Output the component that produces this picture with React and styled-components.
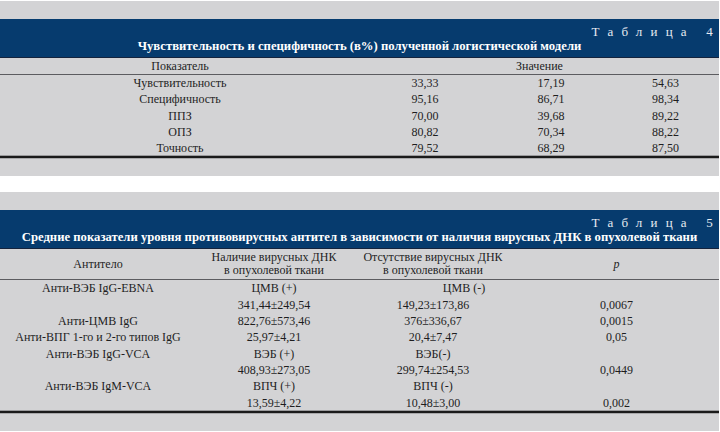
import React from "react";
import styled, { createGlobalStyle } from "styled-components";

const Global = createGlobalStyle`
  html, body { margin: 0; padding: 0; background: #ffffff; }
  body { padding: 1px 1px 0 0; font-family: "Liberation Serif", "Times New Roman", serif; }
`;

const Page = styled.div`
  display: flex;
  flex-direction: column;
  gap: 16px;
  width: 719px;
`;

const Block = styled.section`
  background: #d3d3d5;
  padding: 18px 0 ${(p) => p.$bottom}px;
  color: #1e1e1e;
`;

const Header = styled.div`
  background: #063b6e;
  height: 39px;
  border-bottom: 1px solid #14233d;
  display: flex;
  flex-direction: column;
  padding: 6px 6px 0 0;
  box-sizing: border-box;
`;

const Label = styled.div`
  align-self: flex-end;
  color: #e6ebf1;
  font-size: 13px;
  line-height: 14px;
  letter-spacing: 8.2px;
  margin-right: -8px;
`;

const Title = styled.div`
  color: #ffffff;
  font-weight: bold;
  font-size: 12.7px;
  line-height: 14px;
  text-align: center;
  padding-left: 6px;
  white-space: nowrap;
`;

const Row = styled.div`
  display: grid;
  grid-template-columns: ${(p) => p.$cols};
  font-size: 12px;
  line-height: ${(p) => p.$lh || "16.3px"};
  text-align: center;
  border-bottom: ${(p) => (p.$head ? "1px solid #5c5c60" : "none")};
  padding: ${(p) => p.$pad || "0"};
`;

const Cell = styled.div`
  grid-column: ${(p) => p.$span || "auto"};
  padding-left: ${(p) => p.$shift || 0}px;
  white-space: nowrap;
  font-style: ${(p) => (p.$italic ? "italic" : "normal")};
  display: flex;
  align-items: center;
  justify-content: center;
`;

const Rule = styled.div`
  height: 2px;
  background: #1a1a1a;
  border-top: 1px solid #9a9a9c;
  border-bottom: 1px solid #a8a8aa;
  margin-top: -1px;
`;

const cols1 = "360px 130px 122px 1fr";
const cols2 = "196px 156px 162px 1fr";

const data1 = [
  ["Чувствительность", "33,33", "17,19", "54,63"],
  ["Специфичность", "95,16", "86,71", "98,34"],
  ["ППЗ", "70,00", "39,68", "89,22"],
  ["ОПЗ", "80,82", "70,34", "88,22"],
  ["Точность", "79,52", "68,29", "87,50"],
];

const data2 = [
  ["Анти-ВЭБ IgG-EBNA", "ЦМВ (+)", "ЦМВ (-)", ""],
  ["", "341,44±249,54", "149,23±173,86", "0,0067"],
  ["Анти-ЦМВ IgG", "822,76±573,46", "376±336,67", "0,0015"],
  ["Анти-ВПГ 1-го и 2-го типов IgG", "25,97±4,21", "20,4±7,47", "0,05"],
  ["Анти-ВЭБ IgG-VCA", "ВЭБ (+)", "ВЭБ(-)", ""],
  ["", "408,93±273,05", "299,74±254,53", "0,0449"],
  ["Анти-ВЭБ IgM-VCA", "ВПЧ (+)", "ВПЧ (-)", ""],
  ["", "13,59±4,22", "10,48±3,00", "0,002"],
];

export default function App() {
  return (
    <>
      <Global />
      <Page>
        <Block $bottom={17}>
          <Header>
            <Label>Таблица 4</Label>
            <Title>Чувствительность и специфичность (в%) полученной логистической модели</Title>
          </Header>
          <Row $cols={cols1} $head $lh="14px" $pad="1px 0">
            <Cell>Показатель</Cell>
            <Cell $span="2 / 5">Значение</Cell>
          </Row>
          {data1.map((r, i) => (
            <Row key={i} $cols={cols1}>
              {r.map((c, j) => (
                <Cell key={j}>{c}</Cell>
              ))}
            </Row>
          ))}
          <Rule />
        </Block>
        <Block $bottom={17}>
          <Header>
            <Label>Таблица 5</Label>
            <Title>
              Средние показатели уровня противовирусных антител в зависимости от наличия вирусных ДНК в опухолевой ткани
            </Title>
          </Header>
          <Row $cols={cols2} $head $lh="13px" $pad="2px 0 2px">
            <Cell>Антитело</Cell>
            <Cell>
              Наличие вирусных ДНК
              <br />в опухолевой ткани
            </Cell>
            <Cell>
              Отсутствие вирусных ДНК
              <br />в опухолевой ткани
            </Cell>
            <Cell $italic>p</Cell>
          </Row>
          {data2.map((r, i) => (
            <Row key={i} $cols={cols2}>
              {r.map((c, j) => (
                <Cell key={j} $shift={i === 0 && j === 2 ? 62 : 0}>
                  {c}
                </Cell>
              ))}
            </Row>
          ))}
          <Rule />
        </Block>
      </Page>
    </>
  );
}
